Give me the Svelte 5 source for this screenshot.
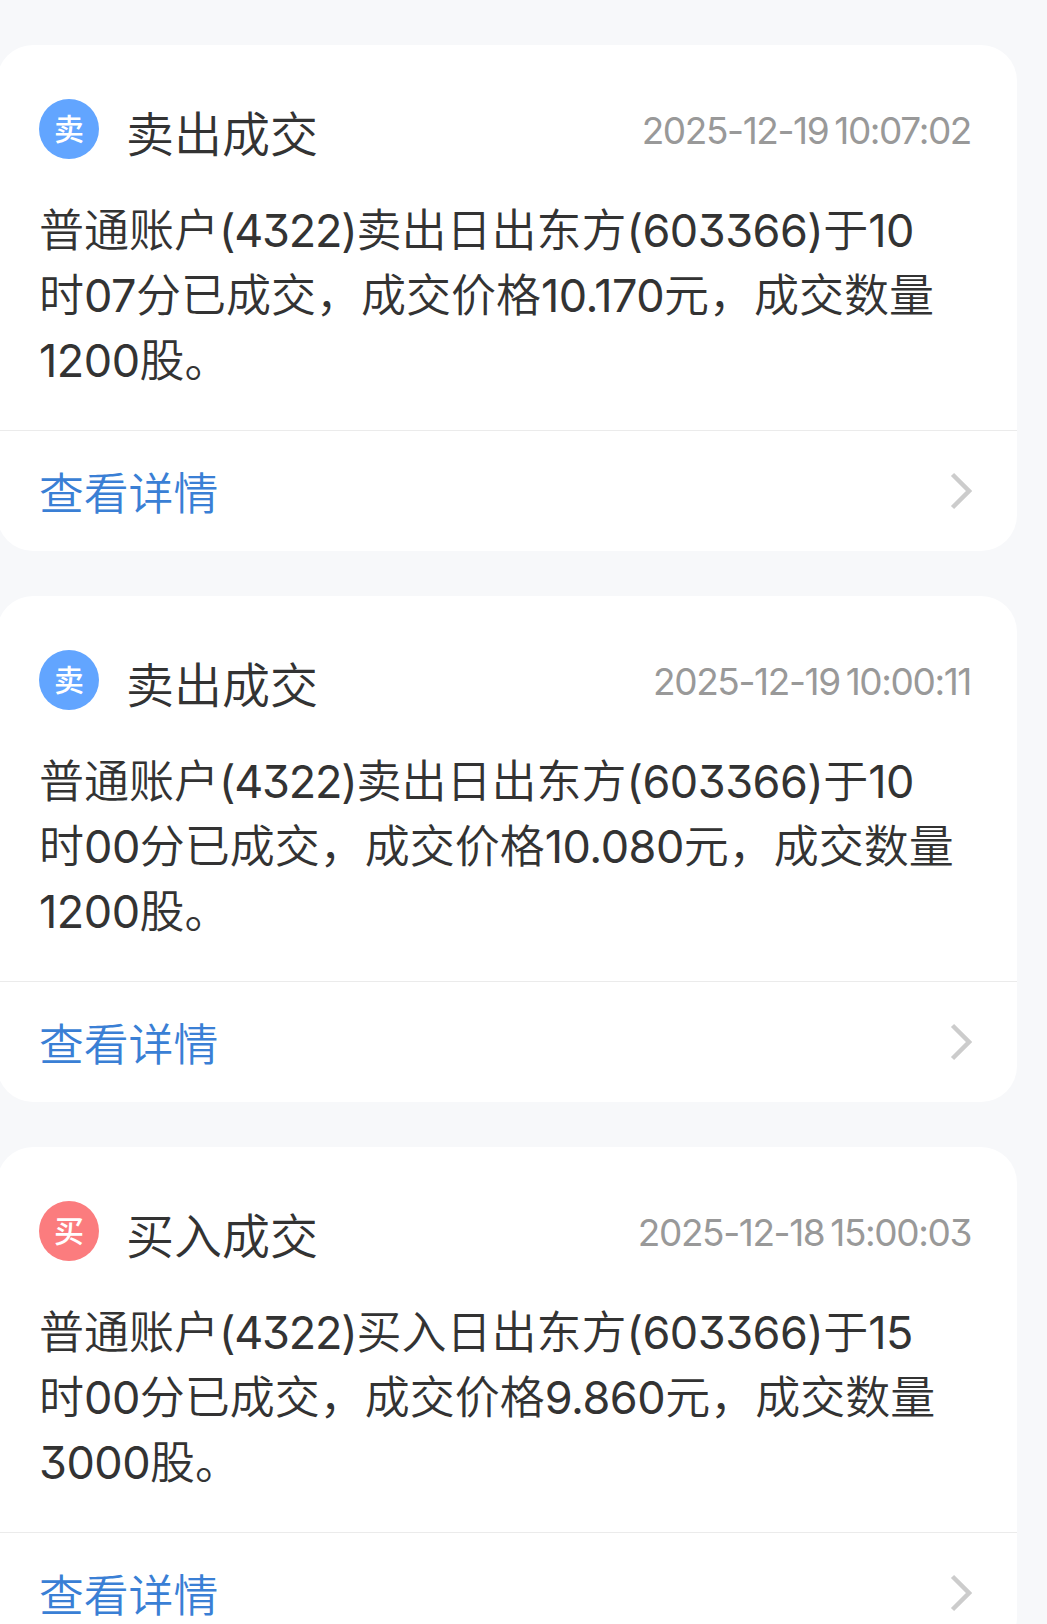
<script lang="ts">
	type Trade = {
		side: 'sell' | 'buy';
		time: string;
		lines: string[];
	};

	const trades: Trade[] = [
		{
			side: 'sell',
			time: '2025-12-19 10:07:02',
			lines: [
				'普通账户(4322)卖出日出东方(603366)于10',
				'时07分已成交，成交价格10.170元，成交数量',
				'1200股。'
			]
		},
		{
			side: 'sell',
			time: '2025-12-19 10:00:11',
			lines: [
				'普通账户(4322)卖出日出东方(603366)于10',
				'时00分已成交，成交价格10.080元，成交数量',
				'1200股。'
			]
		},
		{
			side: 'buy',
			time: '2025-12-18 15:00:03',
			lines: [
				'普通账户(4322)买入日出东方(603366)于15',
				'时00分已成交，成交价格9.860元，成交数量',
				'3000股。'
			]
		}
	];

	const labels = {
		sell: { badge: '卖', title: '卖出成交' },
		buy: { badge: '买', title: '买入成交' }
	};

	// numbers get their own spacing, so split them from the Chinese text
	function runs(line: string) {
		return line.split(/([0-9.()]+)/).filter(Boolean);
	}
</script>

<main class="feed">
	{#each trades as trade}
		<article class="card">
			<header class="head">
				<span class="badge {trade.side}">{labels[trade.side].badge}</span>
				<h2 class="title">{labels[trade.side].title}</h2>
				<time class="time">{trade.time}</time>
			</header>
			<div class="body">
				{#each trade.lines as line}
					<p class="line">{#each runs(line) as run}<span class:num={/^[0-9.()]/.test(run)} class:account={/^\(\d{4}\)$/.test(run)}>{run}</span>{/each}</p>
				{/each}
			</div>
			<a class="more" href="#detail">
				<span>查看详情</span>
				<svg class="chevron" viewBox="0 0 22 38" aria-hidden="true">
					<path d="M2.5 2.5 19 19 2.5 35.5" />
				</svg>
			</a>
		</article>
	{/each}
</main>

<style>
	:global(body) {
		background: #f7f8fa;
		overflow: hidden;
	}

	.feed {
		display: flex;
		flex-direction: column;
		gap: 45px;
		height: 1624px;
		padding: 45px 30px 0 0;
		margin-left: -3px;
		box-sizing: border-box;
		overflow: hidden;
		background: #f7f8fa;
		color: #333;
		font-family: Inter, 'Noto Sans CJK SC', sans-serif;
		font-weight: 350;
		font-feature-settings: 'cv09' 1, 'calt' 0;
	}

	.card {
		display: flex;
		flex-direction: column;
		flex: none;
		height: 506px;
		border-radius: 36px;
		background: #fff;
	}

	.head {
		display: flex;
		align-items: center;
		height: 60px;
		padding: 54px 46px 0 42px;
	}

	.badge {
		display: flex;
		align-items: center;
		justify-content: center;
		width: 60px;
		height: 60px;
		border-radius: 50%;
		color: #fff;
		font-size: 30px;
		font-weight: 500;
		line-height: 60px;
	}

	.badge.sell {
		background: #62a5ff;
	}

	.badge.buy {
		background: #fb7c7e;
	}

	.title {
		margin: 11px 0 0 27px;
		font-size: 48px;
		font-weight: 350;
		line-height: 60px;
	}

	.time {
		margin-left: auto;
		padding-top: 2px;
		color: #999;
		font-size: 37px;
		font-weight: 400;
		letter-spacing: -1.4px;
		word-spacing: -3px;
		white-space: pre;
	}

	.body {
		flex: 1;
		padding: 40px 42px 0;
	}

	.line {
		margin: 0;
		font-size: 45px;
		line-height: 64.8px;
		white-space: nowrap;
	}

	.num {
		font-weight: 400;
		letter-spacing: -0.5px;
	}

	.num.account {
		letter-spacing: -1.2px;
	}

	.more {
		display: flex;
		align-items: center;
		justify-content: space-between;
		height: 120px;
		padding: 0 45px 0 42px;
		border-top: 1px solid #ebebeb;
		color: #3a7fd5;
		font-size: 44.8px;
		text-decoration: none;
	}

	.more span {
		padding-bottom: 2px;
	}

	.chevron {
		width: 22px;
		height: 38px;
		fill: none;
		stroke: #ccc;
		stroke-width: 4.5;
	}
</style>
